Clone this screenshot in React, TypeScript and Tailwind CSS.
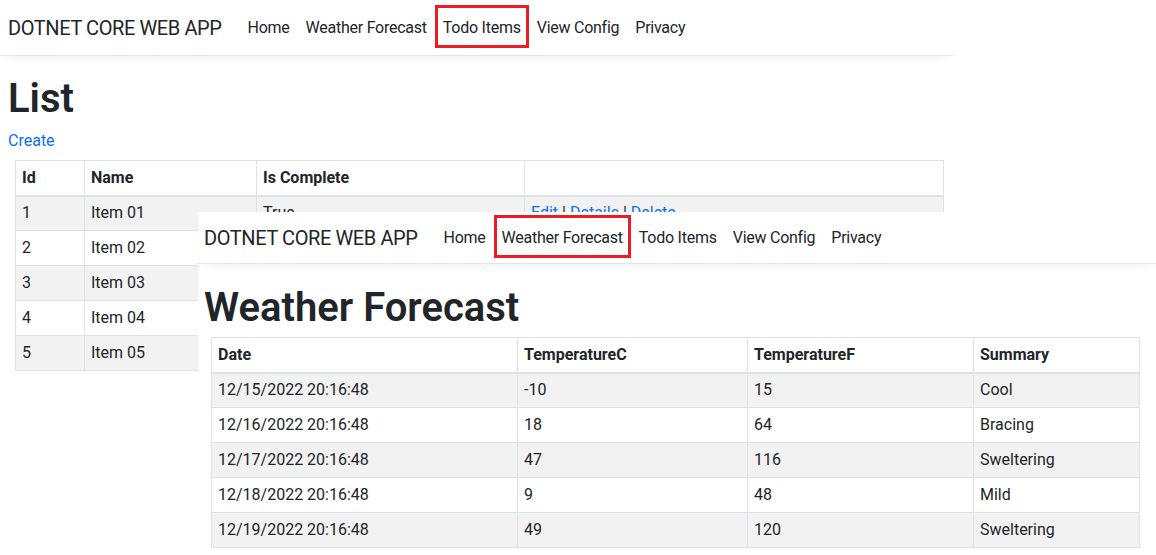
import React from 'react';

const font = { fontFamily: 'Roboto, "Open Sans", sans-serif' };

type NavProps = { active: string; height: string; pad: string };

const NavBar: React.FC<NavProps> = ({ active, height, pad }) => {
  const links = ['Home', 'Weather Forecast', 'Todo Items', 'View Config', 'Privacy'];
  return (
    <nav className={`flex items-center bg-white border-b border-[#e5e5e5] shadow-[0_8px_10px_-6px_rgba(0,0,0,0.06)] ${height} ${pad}`}>
      <span className="text-[20px] leading-[30px] tracking-[-0.4px] text-[#212529] mr-[18px]">DOTNET CORE WEB APP</span>
      <ul className="flex items-center">
        {links.map((l) =>
          l === active ? (
            <li
              key={l}
              className="flex items-center h-[43px] -mt-[3px] pt-[3px] px-[5px] border-[3px] border-[#ec1c24] text-[16px] leading-6 tracking-[-0.25px] text-[#212529]"
            >
              {l}
            </li>
          ) : (
            <li key={l} className="px-2 text-[16px] leading-6 tracking-[-0.25px] text-[#212529]">
              {l}
            </li>
          )
        )}
      </ul>
    </nav>
  );
};

const cell = 'border border-[#dee2e6] px-[6px] h-[35px] text-left align-middle';

const TodoPage: React.FC = () => {
  const items = ['Item 01', 'Item 02', 'Item 03', 'Item 04', 'Item 05'];
  return (
    <div className="w-[953px] bg-white">
      <NavBar active="Todo Items" height="h-[56px]" pad="pl-2" />
      <div className="px-2">
        <h1 className="mt-[19px] mb-[6px] text-[40px] leading-[48px] font-semibold text-[#212529]">List</h1>
        <p className="mb-[7px] text-[16px] leading-6 text-[#0d6efd]">Create</p>
        <table className="ml-[7px] w-[929px] border-collapse text-[16px] leading-6 text-[#212529]">
          <thead>
            <tr className="border-b-2 border-[#dee2e6]">
              <th className={`${cell} w-[69px] font-bold`}>Id</th>
              <th className={`${cell} w-[172px] font-bold`}>Name</th>
              <th className={`${cell} w-[268px] font-bold`}>Is Complete</th>
              <th className={cell}></th>
            </tr>
          </thead>
          <tbody>
            {items.map((it, i) => (
              <tr key={it} className={i % 2 === 0 ? 'bg-[#f2f2f2]' : 'bg-white'}>
                <td className={cell}>{i + 1}</td>
                <td className={cell}>{it}</td>
                <td className={cell}>True</td>
                <td className={cell}>
                  <span className="text-[#0d6efd]">Edit</span> | <span className="text-[#0d6efd]">Details</span> |{' '}
                  <span className="text-[#0d6efd]">Delete</span>
                </td>
              </tr>
            ))}
          </tbody>
        </table>
      </div>
    </div>
  );
};

const forecasts = [
  ['12/15/2022 20:16:48', '-10', '15', 'Cool'],
  ['12/16/2022 20:16:48', '18', '64', 'Bracing'],
  ['12/17/2022 20:16:48', '47', '116', 'Sweltering'],
  ['12/18/2022 20:16:48', '9', '48', 'Mild'],
  ['12/19/2022 20:16:48', '49', '120', 'Sweltering'],
];

const WeatherPage: React.FC = () => (
  <div className="absolute left-[198px] top-[212px] w-[958px] h-[343px] bg-white">
    <NavBar active="Weather Forecast" height="h-[52px]" pad="pl-[6px]" />
    <div className="px-[6px]">
      <h1 className="mt-[20px] mb-[5px] text-[40px] leading-[48px] font-semibold text-[#212529]">Weather Forecast</h1>
      <table className="ml-[7px] w-[929px] border-collapse text-[16px] leading-6 text-[#212529]">
        <thead>
          <tr className="border-b-2 border-[#dee2e6]">
            <th className={`${cell} w-[306px] font-bold`}>Date</th>
            <th className={`${cell} w-[230px] font-bold`}>TemperatureC</th>
            <th className={`${cell} w-[226px] font-bold`}>TemperatureF</th>
            <th className={`${cell} font-bold`}>Summary</th>
          </tr>
        </thead>
        <tbody>
          {forecasts.map((r, i) => (
            <tr key={r[0]} className={i % 2 === 0 ? 'bg-[#f2f2f2]' : 'bg-white'}>
              {r.map((c, j) => (
                <td key={j} className={cell}>
                  {c}
                </td>
              ))}
            </tr>
          ))}
        </tbody>
      </table>
    </div>
  </div>
);

export default function App() {
  return (
    <div className="relative w-[1156px] h-[555px] overflow-hidden bg-white" style={font}>
      <TodoPage />
      <WeatherPage />
    </div>
  );
}
